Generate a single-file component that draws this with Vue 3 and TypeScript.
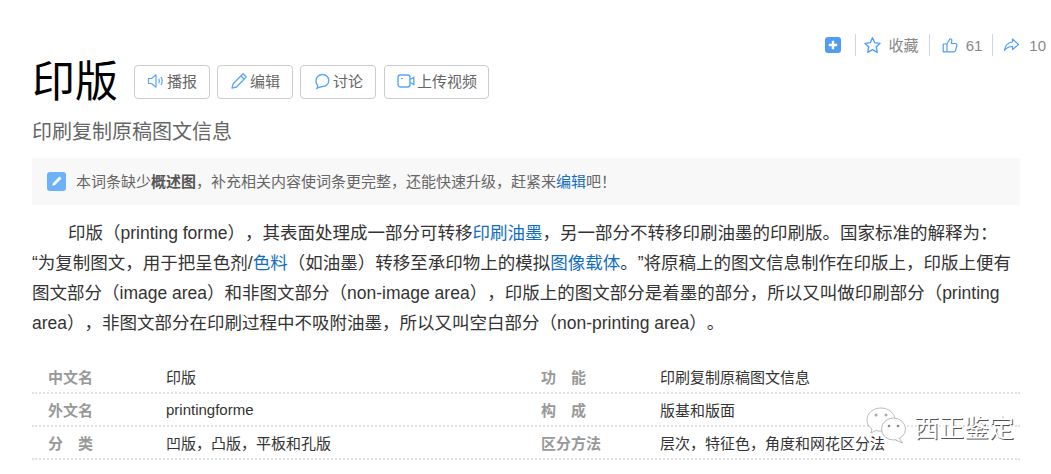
<script setup lang="ts">
const rows = [
  { a: '中文名', b: '印版', c: '功　能', d: '印刷复制原稿图文信息' },
  { a: '外文名', b: 'printingforme', c: '构　成', d: '版基和版面' },
  { a: '分　类', b: '凹版，凸版，平板和孔版', c: '区分方法', d: '层次，特征色，角度和网花区分法' },
]
</script>

<template>
  <div class="page">
    <div class="tools">
      <span class="plus"><svg viewBox="0 0 16 16" width="16" height="16"><rect width="16" height="16" rx="3" fill="#4f9cf2"/><path d="M8 3.800v8.400M3.800 8h8.400" stroke="#fff" stroke-width="2.400"/></svg></span>
      <span class="sep s1"></span>
      <svg class="ti i1" viewBox="0.500 0.500 15 15" width="17" height="17"><path d="M8 1.200l2 4.300 4.700.6-3.400 3.200.9 4.700L8 11.700l-4.200 2.300.9-4.700L1.300 6.100 6 5.500z" fill="none" stroke="#4f9ef5" stroke-width="1.200" stroke-linejoin="round"/></svg>
      <span class="tt fav">收藏</span>
      <span class="sep s2"></span>
      <svg class="ti i2" viewBox="0 0 16 16" width="16" height="16"><path d="M5 7l2.800-5c1.300-.6 2.300.4 2 1.800L9.300 6.500h4c1.200 0 1.800.9 1.500 2l-1.200 4.800c-.3 1-1 1.500-2 1.500H5zM5 7H1.200v7.800H5" fill="none" stroke="#4f9ef5" stroke-width="1.200" stroke-linejoin="round"/></svg>
      <span class="tt">61</span>
      <span class="sep s2"></span>
      <svg class="ti i3" viewBox="0 0 16 16" width="16" height="16"><path d="M9.500 2l6 5.500-6 5v-3c-3.500 0-6 1.200-8 4 .5-4.500 3.200-8 8-8.500z" fill="none" stroke="#4f9ef5" stroke-width="1.200" stroke-linejoin="round"/></svg>
      <span class="tt">10</span>
    </div>

    <div class="head">
      <h1>印版</h1>
      <div class="btns">
        <button class="btn">
          <svg viewBox="0 0 18 18" width="18" height="18"><path d="M1.500 6.500h3L9 2.800v12.400l-4.500-3.700h-3zM11.800 6.800c.8 1.400.8 3 0 4.400M14 5c1.500 2.500 1.500 5.500 0 8" fill="none" stroke="#5ba6f5" stroke-width="1.200" stroke-linejoin="round"/></svg>播报
        </button>
        <button class="btn">
          <svg viewBox="0 0 18 18" width="18" height="18"><path d="M13 1.800l3.200 3.200L6.500 15 2 16.200 3.200 11.700zM11 4l3.200 3.200" fill="none" stroke="#5ba6f5" stroke-width="1.300" stroke-linejoin="round"/></svg>编辑
        </button>
        <button class="btn">
          <svg viewBox="0 0 18 18" width="18" height="18"><path d="M9.500 2.500c3.600 0 6.300 2.700 6.300 6s-2.700 6-6.300 6c-1 0-2 .6-5.500 1.800.6-1.200 1-2.300.5-3.300-1.500-1.200-1.500-2.800-1.500-4.500 0-3.300 2.900-6 6.500-6z" fill="none" stroke="#5ba6f5" stroke-width="1.400"/></svg>讨论
        </button>
        <button class="btn last">
          <svg viewBox="0 0 18 18" width="18" height="18"><rect x="1" y="3" width="12" height="12" rx="2.500" fill="none" stroke="#5ba6f5" stroke-width="1.400"/><path d="M13 7.500l3.800-2v7L13 10.500" fill="none" stroke="#5ba6f5" stroke-width="1.400"/><path d="M4 6.500h2" stroke="#5ba6f5"/></svg>上传视频
        </button>
      </div>
    </div>

    <h2>印刷复制原稿图文信息</h2>

    <div class="notice">
      <span class="nicon"><svg viewBox="0 0 19 19" width="19" height="19"><rect width="19" height="19" rx="3" fill="#6db2f8"/><path d="M12.500 4.500l2 2-6.500 6.500-2.800.8.800-2.800z" fill="#fff"/></svg></span>
      <span class="ntext">本词条缺少<b>概述图</b>，补充相关内容使词条更完整，还能快速升级，赶紧来<a>编辑</a>吧！</span>
    </div>

    <p class="para">印版（printing forme），其表面处理成一部分可转移<a>印刷油墨</a>，另一部分不转移印刷油墨的印刷版。国家标准的解释为：<br>“为复制图文，用于把呈色剂/<a>色料</a>（如油墨）转移至承印物上的模拟<a>图像载体</a>。”将原稿上的图文信息制作在印版上，印版上便有图文部分（image area）和非图文部分（non-image area），印版上的图文部分是着墨的部分，所以又叫做印刷部分（printing area），非图文部分在印刷过程中不吸附油墨，所以又叫空白部分（non-printing area）。</p>

    <div class="table">
      <div v-for="r in rows" :key="r.a" class="row">
        <span class="k k1">{{ r.a }}</span>
        <span class="v v1">{{ r.b }}</span>
        <span class="k k2">{{ r.c }}</span>
        <span class="v">{{ r.d }}</span>
      </div>
    </div>

    <div class="mark">
      <svg viewBox="0 0 40 38" width="40" height="38">
        <path d="M15 1C7 1 1 6 1 13c0 4 2 7 5 9l-1 4 5-2.500c1.500.4 3 .6 5 .6 8 0 14-5 14-11.100S23 1 15 1z" fill="#fff" fill-opacity=".85" stroke="#bbb" stroke-width="1"/>
        <ellipse cx="27.500" cy="22" rx="12" ry="11" fill="#fff" fill-opacity=".9" stroke="#bbb" stroke-width="1"/>
        <path d="M33 31l3.500 5-7-3" fill="#fff" stroke="#bbb"/>
        <circle cx="10" cy="8" r="1.500" fill="#aaa"/><circle cx="20" cy="8" r="1.500" fill="#aaa"/>
        <circle cx="23" cy="19" r="1.300" fill="#888"/><circle cx="32" cy="19" r="1.300" fill="#888"/>
      </svg>
      <span>西正鉴定</span>
    </div>
  </div>
</template>

<style>
html, body { margin: 0; background: #fff; overflow: hidden; }
</style>

<style scoped>
.page {
  position: relative;
  box-sizing: border-box;
  width: 1051px;
  height: 474px;
  padding: 35px 31px 0 32px;
  overflow: hidden;
  font-family: "Liberation Sans", "Noto Sans CJK SC", sans-serif;
  color: #333;
  text-spacing-trim: space-all;
}
.tools {
  display: flex;
  align-items: center;
  justify-content: flex-end;
  height: 20px;
  margin-right: -26px;
  font-size: 15px;
  color: #888;
}
.plus { display: flex; width: 16px; height: 16px; }
.sep { width: 1px; height: 22px; background: #cfd6df; }
.s1 { margin: 0 8px 0 14px; }
.s2 { margin: 0 10px; }
.ti { margin-right: 8px; }
.i2 { margin-left: 2px; margin-right: 8px; }
.i3 { margin-right: 10px; }
.tt { line-height: 20px; padding-top: 1px; }
.head {
  display: flex;
  align-items: center;
  height: 48px;
  margin-top: 3px;
}
h1 {
  margin: 0 16px 0 0;
  font-size: 43px;
  font-weight: 400;
  color: #000;
  line-height: 48px;
}
.btns { display: flex; gap: 7px; }
.btn {
  display: flex;
  align-items: center;
  justify-content: center;
  gap: 2px;
  box-sizing: border-box;
  height: 34px;
  padding: 0 12px 3px;
  background: #fff;
  border: 1px solid #ccc;
  border-radius: 4px;
  font: inherit;
  font-size: 15px;
  color: #666;
}
.last { margin-left: 1px; padding-right: 11px; }
h2 {
  margin: 13px 0 0;
  font-size: 20px;
  font-weight: 400;
  line-height: 26px;
  color: #666;
}
.notice {
  display: flex;
  align-items: center;
  gap: 10px;
  height: 47px;
  margin-top: 13px;
  padding-left: 15px;
  background: #f8f8f8;
  font-size: 15px;
  color: #666;
}
.ntext { padding-bottom: 2px; }
.nicon { display: flex; }
.notice b { font-weight: 700; color: #555; }
a { color: #136ec2; }
.para {
  margin: 13px 0 0;
  font-size: 17.500px;
  line-height: 30px;
  text-indent: 36px;
  color: #333;
}
.table { margin-top: 23px; }
.row {
  display: flex;
  align-items: center;
  height: 33px;
  box-sizing: border-box;
  border-bottom: 2px dotted #e2e2e2;
  font-size: 15px;
}
.k { font-weight: 700; color: #999; }
.k1 { width: 118px; margin-left: 16px; }
.v1 { width: 375px; }
.k2 { width: 119px; }
.v { color: #333; }
.mark {
  position: absolute;
  left: 866px;
  top: 407px;
  display: flex;
  align-items: center;
  gap: 8px;
  font-size: 25px;
  color: #fff;
}
.mark span { text-shadow: 1px 1px 0.300px rgba(50, 50, 50, 0.85); }
</style>
